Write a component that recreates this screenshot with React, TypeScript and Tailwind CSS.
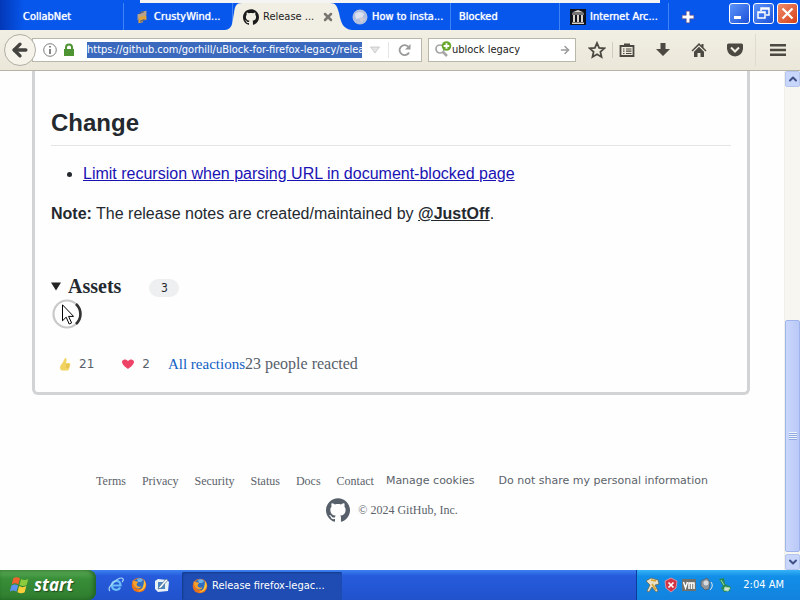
import type { ReactNode } from "react";
import { ArrowLeft, ArrowRight, ChevronDown, ChevronUp, X } from "lucide-react";
import { SiGithub } from "react-icons/si";

interface Tab {
  title: string;
  icon?: ReactNode;
  active?: boolean;
}

const SITE_LINKS = ["Terms", "Privacy", "Security", "Status", "Docs", "Contact"];

/** Python style snake icon */
function SnakeIcon() {
  return (
    <svg viewBox="-1 -1 18 18" className="size-4">
      <path d="M3 8V5l4-1V2l6-1v5l-2 2-6 1-2 3z" fill="#b9a287" />
      <path d="M13 7v4l-4 1v2l-5 1v-5l2-2 5-1z" fill="#e0a33c" />
      <path d="M5 4l5-2M6 13l5-2" stroke="#555f7d" strokeWidth="1.5" />
    </svg>
  );
}

function GlobeIcon() {
  return (
    <svg viewBox="0 0 16 16" className="size-4">
      <circle cx="8" cy="8" r="7.5" fill="#b4c0df" />
      <path d="M3 5q5-4 9 0l-2 4-6 1z" fill="#dde2ef" />
      <path d="M7 9q4-2 6 1l-4 4z" fill="#cdcbd6" />
    </svg>
  );
}

function ArchiveIcon() {
  return (
    <svg viewBox="0 0 16 16" className="size-4">
      <path d="M0 0h16v16H0z" fill="#11131d" />
      <path d="M8 1l6 2.5H2zM2 4.5h12v1H2zM3 6h2v7H3zM7 6h2v7H7zM11 6h2v7h-2zM2 13.5h12V15H2z" fill="#d9d3ca" />
    </svg>
  );
}

function FirefoxIcon() {
  return (
    <svg viewBox="0 0 16 16" className="size-4 shrink-0">
      <circle cx="8" cy="8" r="7.3" fill="#e8731c" />
      <circle cx="8.2" cy="6.6" r="5.4" fill="#2e6fc4" />
      <path d="M6 2q4-2 6 1l-2 2H7z" fill="#6fb3ea" />
      <path d="M1.5 3.5Q3 4 5 4.2q2 0 2 1.3L5.5 7q0 2 2 2.5 2 .5 3-.5-1 3-4 2.5Q2 10 1.5 3.5z" fill="#f6a12b" />
      <path d="M13 3q3 4 .5 8Q11 15 7 14q6-1 6-11z" fill="#fbc53e" />
    </svg>
  );
}

function InternetExplorerIcon() {
  return (
    <svg viewBox="0 0 16 16" className="size-4" fill="none">
      <path d="M4 8.5h8.5Q12.5 4 8.5 4 4 4.2 4 8.5t4.5 4.3q2.5 0 3.7-2.3" stroke="#6cc0f7" strokeWidth="2.2" />
      <path d="M2 14Q-1 11 6 5t9-3q1 1-1 3" stroke="#a8d8f5" strokeWidth="1.2" />
    </svg>
  );
}

function DesktopIcon() {
  return (
    <svg viewBox="0 0 16 16" className="size-4">
      <path d="M1 4l3-2 9 1 2 2-1 9-10 1-3-3z" fill="#e8f1f8" />
      <path d="M4 5h7v7H4z" fill="#4d86bd" />
      <path d="M5 10l7-8 2 1-7 8-3 1z" fill="#fff" stroke="#4b6b8d" strokeWidth=".7" />
    </svg>
  );
}

function WindowsFlag() {
  return (
    <svg viewBox="0 0 18 18" className="size-5">
      <path d="M3 3q3-2 6 0L7.5 8.5q-3-2-6 0z" fill="#f0622d" />
      <path d="M10 3.5q3 2 6.5 0L15 9q-3 2-6.5 0z" fill="#8ccb3c" />
      <path d="M1.3 9.5q3-2 6 0L5.8 15q-3-2-6 0z" fill="#5c92ee" />
      <path d="M8.2 10q3 2 6.5 0l-1.5 5.5q-3 2-6.5 0z" fill="#fbce3a" />
    </svg>
  );
}

const TABS: Tab[] = [
  { title: "CollabNet" },
  { title: "CrustyWind...", icon: <SnakeIcon /> },
  { title: "Release ...", icon: <SiGithub className="size-4 text-[#1b1b1b]" />, active: true },
  { title: "How to insta...", icon: <GlobeIcon /> },
  { title: "Blocked" },
  { title: "Internet Arc...", icon: <ArchiveIcon /> },
];

function TabItem({ tab }: { tab: Tab }) {
  if (tab.active) {
    return (
      <div className="relative flex h-full min-w-0 max-w-[109px] flex-1 items-center">
        {/* Curved tab outline that runs over both neighbours */}
        <svg viewBox="0 0 127 27" preserveAspectRatio="none" className="absolute inset-y-0 -left-2 h-full w-[127px]">
          <path d="M0 27C8 26 7 20 9 10 10 3 11 0 17 0H105C111 0 112 3 114 10 116 20 118 26 127 27z" fill="#f1eee3" />
        </svg>
        <button className="relative flex min-w-0 flex-1 items-center gap-1 pl-2.5 text-[#222]">
          {tab.icon}
          <span className="whitespace-nowrap">{tab.title}</span>
        </button>
        <button aria-label="Close tab" className="relative mr-2">
          <X className="size-3 text-[#77766f]" strokeWidth={5} />
        </button>
      </div>
    );
  }
  return (
    <button
      className={`flex h-full min-w-0 max-w-[109px] flex-1 items-center gap-1 border-r border-[#3f83f4] text-white [text-shadow:0_0_1px_#fff] ${
        tab.icon ? "pl-2.5" : "pl-2"
      }`}
    >
      {tab.icon}
      <span className="whitespace-nowrap">{tab.title}</span>
    </button>
  );
}

function TitleBar() {
  return (
    <header className="bg-linear-to-r from-[#0338b8] via-[#0757ec] via-3% to-[#0757ec]">
      <div className="mx-[140px] h-[3px] bg-[#f3f4f3]" />
      <div className="flex h-[27px] items-center pl-[15px] pr-0.5">
        {TABS.map((tab) => (
          <TabItem key={tab.title} tab={tab} />
        ))}
        <button aria-label="New tab" className="ml-2.5 p-0.5">
          <svg viewBox="0 0 12 12" className="size-3.5">
            <path d="M4.500 1h3v3.500H11v3H7.500V11h-3V7.500H1v-3h3.500z" fill="#fff" stroke="#7b4670" strokeWidth=".5" />
          </svg>
        </button>
        <div className="ml-auto flex gap-[3px] self-start">
          <button aria-label="Minimize" className="size-[21px] rounded-[3px] border border-white bg-linear-to-br from-[#5d93fa] to-[#1c50d8]">
            <svg viewBox="0 0 19 19">
              <path d="M4 12h7v3H4z" fill="#fff" />
            </svg>
          </button>
          <button aria-label="Restore" className="size-[21px] rounded-[3px] border border-white bg-linear-to-br from-[#5d93fa] to-[#1c50d8]">
            <svg viewBox="0 0 19 19" fill="none" stroke="#fff" strokeWidth="1.5">
              <path d="M7 7V4h8v7h-3M4 8h7v6H4zM7 5h8M4 8.500h7" />
            </svg>
          </button>
          <button aria-label="Close" className="size-[21px] rounded-[3px] border border-white bg-linear-to-br from-[#f08a67] to-[#d53d13]">
            <svg viewBox="0 0 19 19" stroke="#fff" strokeWidth="2.2">
              <path d="M4.500 4.500l10 10M14.500 4.500l-10 10" />
            </svg>
          </button>
        </div>
      </div>
    </header>
  );
}

function NavBar() {
  return (
    <nav className="flex h-[41px] items-center border-b border-[#b5b2a6] bg-linear-to-b from-[#f1eee3] to-[#ebe8da] pl-1">
      <button aria-label="Back" className="z-10 flex size-8 shrink-0 items-center justify-center rounded-full border border-[#b0aea4] bg-[#f5f3ea]">
        <ArrowLeft className="size-5 text-[#44433f]" strokeWidth={4} />
      </button>
      <div className="-ml-1 flex h-6 min-w-0 flex-1 items-center border border-[#b9b6aa] bg-white pl-2.5">
        <svg viewBox="0 0 14 14" className="size-3.5 shrink-0">
          <circle cx="7" cy="7" r="6.3" fill="none" stroke="#7d7d7d" />
          <path d="M6.200 3h1.600v1.600H6.200zM6.200 6h1.600v5H6.200z" fill="#666" />
        </svg>
        <svg viewBox="0 0 12 14" className="ml-1.5 h-3.5 w-3 shrink-0">
          <path d="M3 7V4.500a3 3 0 016 0V7" fill="none" stroke="#4f9432" strokeWidth="2" />
          <path d="M1 6h10v7H1z" fill="#4f9432" />
        </svg>
        <input
          aria-label="Address"
          readOnly
          value="https://github.com/gorhill/uBlock-for-firefox-legacy/releases"
          className="ml-3 h-4 min-w-0 flex-1 bg-[#3a69bd] text-white outline-none"
        />
        <button aria-label="Show history" className="ml-2 shrink-0">
          <svg viewBox="0 0 10 8" className="h-2 w-2.5">
            <path d="M.5 1h9L5 7z" fill="#e4e4e4" stroke="#bdbdbd" strokeWidth=".7" />
          </svg>
        </button>
        <div className="ml-2 h-4 w-px bg-[#e5e5e5]" />
        <button aria-label="Reload" className="mx-2 shrink-0">
          <svg viewBox="0 0 16 16" className="size-4" fill="none">
            <path d="M12 10.500A5 5 0 1111 4.500" stroke="#9a9a9a" strokeWidth="1.8" />
            <path d="M13.500 2v5.500H8z" fill="#9a9a9a" />
          </svg>
        </button>
      </div>
      <div className="ml-1.5 flex h-6 w-[148px] shrink-0 items-center border border-[#b9b6aa] bg-white px-1">
        <svg viewBox="0 0 19 18" className="h-[18px] w-[19px] shrink-0" fill="none">
          <circle cx="7" cy="8" r="4" stroke="#a5a5a5" strokeWidth="1.7" />
          <path d="M10 11l4 4" stroke="#a5a5a5" strokeWidth="2.5" />
          <circle cx="13.5" cy="5" r="4.8" fill="#67a82d" />
          <path d="M13.500 2.200v5.600M10.700 5h5.600" stroke="#fff" strokeWidth="1.8" />
        </svg>
        <input aria-label="Search" defaultValue="ublock legacy" className="min-w-0 flex-1 text-[#222] outline-none" />
        <ArrowRight className="size-3 shrink-0 text-[#999]" strokeWidth={3} />
      </div>
      <div className="flex shrink-0 items-center pl-3 text-[#4b4941]">
        <button aria-label="Bookmark this page">
          <svg viewBox="0 0 18 18" className="size-[18px]" fill="none">
            <path
              d="M9 2l2.100 4.800 5.200.5-3.900 3.500 1.100 5.100L9 13.200l-4.500 2.700 1.100-5.100L1.700 7.300l5.200-.5z"
              stroke="#4b4941"
              strokeWidth="1.8"
            />
          </svg>
        </button>
        <div className="ml-1.5 h-4 w-px bg-[#cfccc0]" />
        <button aria-label="Bookmarks" className="ml-1.5">
          <svg viewBox="0 0 16 16" className="size-4" fill="none">
            <path d="M1.500 4h13v10h-13z" stroke="#4b4941" strokeWidth="1.8" />
            <path d="M5 4V1.500h6V4z" fill="#4b4941" />
            <path d="M4 7h1.500M7 7h5.500M4 9.200h1.500M7 9.200h5.500M4 11.500h1.500M7 11.500h5.500" stroke="#4b4941" strokeWidth="1.2" />
          </svg>
        </button>
        <button aria-label="Downloads" className="ml-5">
          <svg viewBox="0 0 16 16" className="size-4">
            <path d="M5.500 1h5v6H15l-7 7-7-7h4.500z" fill="#4b4941" />
          </svg>
        </button>
        <button aria-label="Home" className="ml-5">
          <svg viewBox="0 0 16 16" className="size-4">
            <path d="M8 1l2.500 2.500V2h2v3.500L15.500 8.500l-1 1L8 3.200 1.500 9.500l-1-1zM8 4.800l5 5V15H9.500v-4h-3v4H3V9.800z" fill="#4b4941" />
          </svg>
        </button>
        <button aria-label="Pocket" className="ml-5">
          <svg viewBox="0 0 16 16" className="size-4">
            <path d="M1.500 1.500h13q1.500 0 1.500 1.500v4q-1 7-8 7.500Q1 14 0 7V3q0-1.500 1.500-1.500z" fill="#4b4941" />
            <path d="M4 5.500l4 4 4-4" fill="none" stroke="#f1eee3" strokeWidth="2" />
          </svg>
        </button>
        <div className="ml-3 h-8 w-px bg-[#dedbcf]" />
        <button aria-label="Open menu" className="mx-3.5">
          <svg viewBox="0 0 16 14" className="h-3.5 w-4">
            <path d="M0 1h16v2.500H0zM0 5.800h16v2.500H0zM0 10.600h16v2.500H0z" fill="#4b4941" />
          </svg>
        </button>
      </div>
    </nav>
  );
}

/** XP style scroll bar, scrolled to the end */
function ScrollBar() {
  return (
    <div className="flex w-4 shrink-0 flex-col border-l border-[#f0efe8] bg-[#f7f6f0]">
      <button aria-label="Scroll up" className="flex h-4 items-center justify-center rounded-xs border border-[#b4c5f0] bg-[#c9d6fb]">
        <ChevronUp className="size-3 text-[#3f5186]" strokeWidth={4} />
      </button>
      <div className="flex min-h-0 flex-1 flex-col justify-end pb-0.5">
        <div className="flex h-1/2 items-center justify-center rounded-xs border border-[#9fb4ec] bg-linear-to-r from-[#cad7fd] to-[#b9c8f6]">
          <div className="flex w-2 flex-col gap-px">
            {[0, 1, 2, 3].map((i) => (
              <div key={i} className="h-px bg-[#eef4fe] shadow-[0_1px_0_#8fa8e0]" />
            ))}
          </div>
        </div>
      </div>
      <button aria-label="Scroll down" className="flex h-4 items-center justify-center rounded-xs border border-[#b4c5f0] bg-[#c9d6fb]">
        <ChevronDown className="size-3 text-[#3f5186]" strokeWidth={4} />
      </button>
    </div>
  );
}

function Spinner() {
  return (
    <div className="relative w-8">
      <svg viewBox="0 0 32 32" className="size-8" fill="none">
        <circle cx="16" cy="16" r="13.5" stroke="#c9c9c9" strokeWidth="2.2" />
        <path d="M25 6a13.500 13.500 0 010 20" stroke="#333" strokeWidth="2.6" />
      </svg>
      {/* Mouse pointer */}
      <svg viewBox="0 0 12 21" className="absolute left-[11px] top-1.5 h-[21px] w-3">
        <path d="M.5.800v16l3.700-3.600 3 6.800 2.400-1.100-3-6.500h5z" fill="#fff" stroke="#000" />
      </svg>
    </div>
  );
}

function Release() {
  return (
    <section className="ml-8 mr-[34px] rounded-b-md border-x-3 border-b-3 border-[#d2d3d5] px-4 pb-4 pt-9 font-['Liberation_Sans',sans-serif] text-base leading-6 text-[#24292f]">
      <h2 className="border-b border-[#e4e5e7] pb-1.5 text-2xl leading-8 font-bold">Change</h2>
      <ul className="mt-4 list-disc pl-8">
        <li>
          <a href="#commit" className="text-[#1a12b4] underline">
            Limit recursion when parsing URL in document-blocked page
          </a>
        </li>
      </ul>
      <p className="mt-4">
        <strong>Note:</strong> The release notes are created/maintained by{" "}
        <a href="#justoff" className="font-bold underline">
          @JustOff
        </a>
        .
      </p>
      <details open className="mt-12">
        <summary className="flex list-none items-center font-['Liberation_Serif',serif]">
          <svg viewBox="0 0 10 9" className="mr-[7px] h-[9px] w-2.5">
            <path d="M0 .5h10L5 8.500z" fill="#222" />
          </svg>
          <span className="text-xl leading-6 font-bold">Assets</span>
          <span className="ml-7 mt-1 w-[30px] rounded-full bg-[#eeeff0] text-center font-['DejaVu_Sans_Condensed',sans-serif] text-xs leading-[18px]">
            3
          </span>
        </summary>
        <Spinner />
      </details>
      <div className="mt-[22px] flex items-center text-[#57606a]">
        <button className="ml-2 flex items-center gap-2 font-['DejaVu_Sans',sans-serif] text-xs">
          <svg viewBox="0 0 12 14" className="h-3.5 w-3">
            <path d="M6 1q2 0 1.500 2.500L7 6h3q2 .5 1 3l-1 3q-.5 1.500-2 1.500H3Q1 13 1 10.500T3.500 6z" fill="#f0d360" />
            <path d="M7 8h3M7 10h3" stroke="#d5a93f" strokeWidth=".7" />
          </svg>
          21
        </button>
        <button className="ml-7 flex items-center gap-2 font-['DejaVu_Sans',sans-serif] text-xs">
          <svg viewBox="0 0 12 12" className="size-3">
            <path d="M6 11Q0 7 0 4C0 1 4.500 .5 6 3.200 7.500 .5 12 1 12 4 12 7 6 11 6 11z" fill="#ee4266" />
          </svg>
          2
        </button>
        <a href="#reactions" className="ml-[18px] font-['Liberation_Serif',serif] text-[15px] text-[#0f60c4]">
          All reactions
        </a>
        <span className="font-['Liberation_Serif',serif]">23 people reacted</span>
      </div>
    </section>
  );
}

function SiteFooter() {
  return (
    <footer className="mt-[75px] text-xs leading-[22px] text-[#5b626a]">
      <div className="flex flex-wrap items-center justify-center pl-5 whitespace-nowrap">
        <ul className="flex gap-4 font-['Liberation_Serif',serif]">
          {SITE_LINKS.map((link) => (
            <li key={link}>
              <a href={`#${link.toLowerCase()}`}>{link}</a>
            </li>
          ))}
        </ul>
        <button className="ml-3 font-['DejaVu_Sans',sans-serif] text-[11px]">Manage cookies</button>
        <button className="ml-6 font-['DejaVu_Sans',sans-serif] text-[11px]">Do not share my personal information</button>
      </div>
      <div className="mt-1.5 flex items-center justify-center gap-2 font-['Liberation_Serif',serif]">
        <SiGithub className="size-6 text-[#57606a]" />© 2024 GitHub, Inc.
      </div>
    </footer>
  );
}

function Taskbar() {
  return (
    <div className="flex h-[30px] shrink-0 bg-linear-to-b from-[#3c81f0] via-[#265bdc] via-20% to-[#2152cc] text-white">
      <button className="flex w-24 items-center gap-1 rounded-r-lg bg-linear-to-b from-[#5dab58] via-[#388e38] via-30% to-[#2f7d2f] pl-2.5 font-['Open_Sans',sans-serif] text-[17px] font-bold italic shadow-[inset_-2px_0_4px_#1f5f22] [text-shadow:1px_1px_1px_#1f4f1f]">
        <WindowsFlag />
        start
      </button>
      <div className="ml-3 flex items-center gap-[7px]">
        <InternetExplorerIcon />
        <FirefoxIcon />
        <DesktopIcon />
      </div>
      <button className="mt-0.5 ml-3 flex w-40 items-center gap-1 rounded-xs bg-[#1e4cb2] pl-2.5 shadow-[inset_1px_1px_2px_#133987]">
        <FirefoxIcon />
        <span className="whitespace-nowrap">Release firefox-legac...</span>
      </button>
      <div className="ml-auto flex items-center border-l border-[#0c3c9c] bg-linear-to-b from-[#36b3f8] via-[#128fe8] via-20% to-[#1283de] pr-4 pl-2">
        <div className="flex gap-0.5">
          <svg viewBox="0 0 16 16" className="size-4">
            <path d="M1 4l5-3 7 2 1 4-4 1 3 6-2 1-4-5-3 5-2-1 3-6z" fill="#e9e0c8" stroke="#6b6040" strokeWidth=".7" />
            <path d="M6 3l5 1M7 7l4 6" stroke="#d7a42c" strokeWidth="1.5" />
          </svg>
          <svg viewBox="0 0 16 16" className="size-4">
            <path d="M8 1l6 3-1 7-5 4-5-4-1-7z" fill="#d23345" stroke="#f0a0a8" strokeWidth=".8" />
            <path d="M5.500 5.500l5 5M10.500 5.500l-5 5" stroke="#fff" strokeWidth="1.7" />
          </svg>
          <svg viewBox="0 0 16 16" className="size-4">
            <path d="M1 2h14v12H1z" fill="#71716c" />
            <path d="M2.500 5l2 6 2-6M8 12V6h5v6M10.500 6v6" fill="none" stroke="#fff" strokeWidth="1.5" />
          </svg>
          <svg viewBox="0 0 16 16" className="size-4">
            <path d="M2 4l6-3 3 4-1 7-4 1-4-4z" fill="#8f969c" stroke="#4d565f" strokeWidth=".7" />
            <circle cx="7" cy="6" r="2.5" fill="#d7dade" />
            <path d="M12 5q3 4-1 8" fill="none" stroke="#dfe8f0" />
          </svg>
          <svg viewBox="0 0 16 16" className="size-4">
            <path d="M2 2l5-1 1 6 6 3-1 4-6 1-3-4 2-2z" fill="#278a55" />
            <path d="M8 10l5 1-2 3-4-1zM4 3l3 5" fill="#d4e2d8" stroke="#a6dba7" />
          </svg>
        </div>
        <time className="ml-2.5">2:04 AM</time>
      </div>
    </div>
  );
}

export default function App() {
  return (
    <div className="flex h-screen flex-col overflow-hidden bg-[#fefefe] font-['DejaVu_Sans_Condensed',sans-serif] text-[11px] leading-4">
      <TitleBar />
      <NavBar />
      <div className="flex min-h-0 flex-1">
        <main className="min-w-0 flex-1 overflow-hidden">
          <Release />
          <SiteFooter />
        </main>
        <ScrollBar />
      </div>
      <Taskbar />
    </div>
  );
}
